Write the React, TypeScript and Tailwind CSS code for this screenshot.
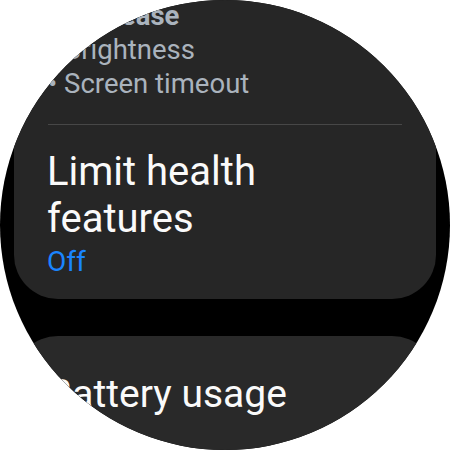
import React from 'react';

const font = { fontFamily: 'Roboto, "Noto Sans", sans-serif' };

export default function App() {
  return (
    <div className="w-[450px] h-[450px] bg-white" style={font}>
      <div className="w-[450px] h-[450px] rounded-full overflow-hidden bg-black flex flex-col">
        {/* first card, scrolled so its top is off screen */}
        <div className="mx-[14px] bg-[#262626] rounded-b-[44px] pb-[21px] shrink-0">
          <div className="-mt-px pl-[34px] text-[27.5px] leading-[34px] text-[#aab3bd]">
            <p className="font-bold pl-[16px]">Decrease</p>
            <p>• Brightness</p>
            <p>• Screen timeout</p>
          </div>
          <div className="mt-[23px] mx-[34px] h-px bg-[#474747]" />
          <div className="mt-[23px] pl-[33px]">
            <p className="text-[40px] leading-[47px] text-[#fafafa]">
              Limit health
              <br />
              features
            </p>
            <p className="mt-[4px] text-[28px] leading-[32px] text-[#1a85ff]">Off</p>
          </div>
        </div>
        <div className="mt-[37px] mx-[14px] bg-[#292929] rounded-t-[44px] pt-[35px] pl-[34px] flex-1">
          <p className="text-[39px] leading-[46px] text-[#fafafa]">Battery usage</p>
        </div>
      </div>
    </div>
  );
}
